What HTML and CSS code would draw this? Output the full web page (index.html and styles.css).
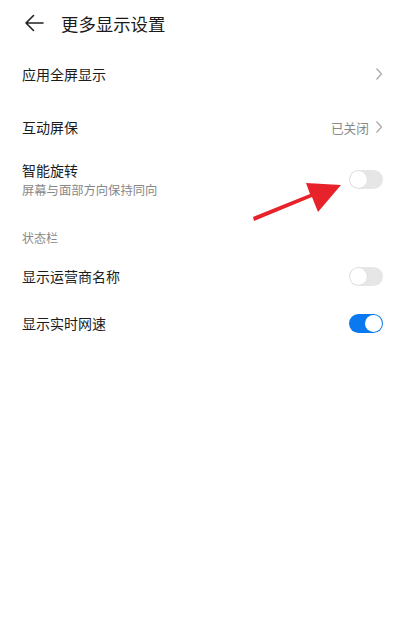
FILE: index.html
```html
<!DOCTYPE html>
<html lang="zh-CN">
<head>
<meta charset="utf-8">
<link rel="stylesheet" href="styles.css">
</head>
<body>
<div class="page">
  <header class="header">
    <svg class="back" width="20" height="18" viewBox="0 0 20 18"><path d="M19 9H2M9.5 1.5L2 9l7.5 7.5" fill="none" stroke="#222" stroke-width="1.6" stroke-linecap="round" stroke-linejoin="round"/></svg>
    <span class="title">更多显示设置</span>
  </header>
  <div class="row r1">
    <span class="label">应用全屏显示</span>
    <svg class="chev" width="8" height="14" viewBox="0 0 8 14"><path d="M1.5 1.5L6.5 7l-5 5.5" fill="none" stroke="#aaa" stroke-width="1.3"/></svg>
  </div>
  <div class="row r2">
    <span class="label">互动屏保</span>
    <div class="right">
      <span class="value">已关闭</span>
      <svg class="chev" width="8" height="14" viewBox="0 0 8 14"><path d="M1.5 1.5L6.5 7l-5 5.5" fill="none" stroke="#aaa" stroke-width="1.3"/></svg>
    </div>
  </div>
  <div class="row r3">
    <div class="texts">
      <span class="label">智能旋转</span>
      <span class="sub">屏幕与面部方向保持同向</span>
    </div>
    <span class="toggle"><span class="knob"></span></span>
  </div>
  <div class="section">状态栏</div>
  <div class="row r4">
    <span class="label">显示运营商名称</span>
    <span class="toggle"><span class="knob"></span></span>
  </div>
  <div class="row r5">
    <span class="label">显示实时网速</span>
    <span class="toggle on"><span class="knob"></span></span>
  </div>
  <svg class="arrow" width="405" height="628" viewBox="0 0 405 628">
    <path d="M254 221 L312 197 L318 212 L341 185 L306 183 L310 194 L253 217 Z" fill="#e8222a"/>
  </svg>
</div>
</body>
</html>
```
FILE: styles.css
```css
html, body {
  margin: 0;
  padding: 0;
  background: #fff;
}
.page {
  position: relative;
  width: 405px;
  height: 628px;
  font-family: "Noto Sans CJK SC", "Noto Sans", sans-serif;
  color: #1c1c1c;
  overflow: hidden;
}
.header {
  height: 46px;
  display: flex;
  align-items: center;
  padding-left: 24px;
}
.back {
  margin-right: 17px;
}
.title {
  font-size: 17.4px;
  color: #1a1a1a;
}
.row {
  display: flex;
  align-items: center;
  justify-content: space-between;
  padding: 0 22px 0 22px;
}
.r1 { height: 56px; }
.r2 { height: 50px; }
.r3 { height: 54px; }
.r4 { height: 48px; }
.r5 { height: 46px; }
.label {
  font-size: 14px;
  line-height: 20px;
}
.right {
  display: flex;
  align-items: center;
}
.value {
  font-size: 12.7px;
  color: #888;
  margin-right: 6px;
}
.chev {
  display: block;
}
.texts {
  display: flex;
  flex-direction: column;
}
.texts .label {
  line-height: 22px;
}
.sub {
  font-size: 12.3px;
  color: #888;
  line-height: 18px;
}
.section {
  height: 30px;
  margin-top: 16px;
  padding: 0 22px;
  display: flex;
  align-items: center;
  font-size: 12px;
  color: #888;
}
.toggle {
  width: 34px;
  height: 19px;
  border-radius: 10px;
  background: #e6e6e6;
  position: relative;
  flex: none;
}
.knob {
  position: absolute;
  top: 1px;
  left: 1px;
  width: 17px;
  height: 17px;
  border-radius: 50%;
  background: #fff;
  box-shadow: 0 0 0 0.5px #d8d8d8;
}
.toggle.on {
  background: #0a79f0;
}
.toggle.on .knob {
  left: 16px;
  box-shadow: none;
}
.arrow {
  position: absolute;
  left: 0;
  top: 0;
  pointer-events: none;
}
```
